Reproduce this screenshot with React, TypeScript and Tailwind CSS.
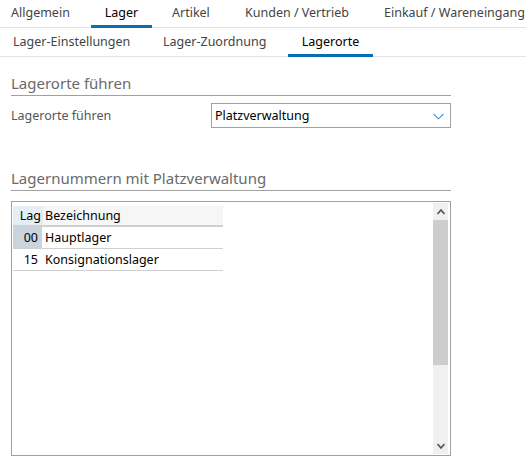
import React from "react";

const font = { fontFamily: '"Noto Sans", "Open Sans", sans-serif' };

export default function App() {
  return (
    <div className="w-[526px] h-[468px] bg-white relative overflow-hidden text-[#333]" style={font}>
      {/* top tabs */}
      <div className="flex h-[28px] border-b border-[#e3e3e3] text-[12.5px] text-[#444]">
        <div className="ml-[11px] w-[80px] pt-[4px]">Allgemein</div>
        <div className="w-[61px] pt-[4px] border-b-[3px] border-[#0a6eb4] text-black text-center -mb-px">Lager</div>
        <div className="ml-[20px] w-[73px] pt-[4px]">Artikel</div>
        <div className="w-[139px] pt-[4px]">Kunden / Vertrieb</div>
        <div className="pt-[4px]">Einkauf / Wareneingang</div>
      </div>
      {/* sub tabs */}
      <div className="flex h-[29px] border-b border-[#e3e3e3] text-[12.5px] text-[#444]">
        <div className="ml-[13px] w-[150px] pt-[5px]">Lager-Einstellungen</div>
        <div className="w-[125px] pt-[5px]">Lager-Zuordnung</div>
        <div className="w-[85px] pt-[5px] border-b-[3px] border-[#0a6eb4] text-black text-center -mb-px">Lagerorte</div>
      </div>

      <div className="px-[11px] w-[462px]">
        <div className="mt-[15px] text-[15px] text-[#6a6a6a] leading-[22px] border-b border-[#a0a0a0] pb-[1px]">Lagerorte führen</div>
        <div className="flex items-center mt-[7px] h-[25px]">
          <div className="w-[200px] text-[12.5px] text-[#555] pt-[2px]">Lagerorte führen</div>
          <div className="flex-1 h-[25px] border border-[#a0a0a0] flex items-center pl-[3px] pr-[6px] pt-[2px] text-[12.5px] text-black">
            <span className="flex-1">Platzverwaltung</span>
            <svg width="11" height="7" viewBox="0 0 11 7">
              <path d="M0.5 0.8 L5.5 5.8 L10.5 0.8" fill="none" stroke="#3a8fd0" strokeWidth="1.1" />
            </svg>
          </div>
        </div>

        <div className="mt-[39px] text-[15px] text-[#6a6a6a] leading-[22px] border-b border-[#a0a0a0] pb-[1px]">Lagernummern mit Platzverwaltung</div>

        <div className="mt-[10px] h-[255px] border border-[#a0a0a0] flex p-[1px]">
          <div className="flex-1 pt-[3px] text-[12.5px]">
            <div className="flex w-[210px] h-[21px] border-b-2 border-[#d0d0d0] bg-[#f6f6f6] text-black">
              <div className="w-[29px] bg-[#e3eef6] text-right pr-[1px] leading-[19px]">Lag</div>
              <div className="flex-1 pl-[2px] border-l border-[#e8e8e8] leading-[19px]">Bezeichnung</div>
            </div>
            <div className="flex w-[210px] h-[22px] border-b border-[#d0d0d0] text-black">
              <div className="w-[29px] bg-[#c9d4de] text-right pr-[4px] leading-[21px]">00</div>
              <div className="flex-1 pl-[3px] leading-[21px]">Hauptlager</div>
            </div>
            <div className="flex w-[210px] h-[22px] border-b border-[#d0d0d0] text-black">
              <div className="w-[29px] text-right pr-[4px] leading-[21px]">15</div>
              <div className="flex-1 pl-[3px] leading-[21px]">Konsignationslager</div>
            </div>
          </div>
          <div className="w-[15px] flex flex-col bg-[#f0f0f0] mr-[1px]">
            <div className="h-[17px] flex items-center justify-center">
              <svg width="8" height="6" viewBox="0 0 8 6">
                <path d="M0.5 5 L4 1 L7.5 5" fill="none" stroke="#555" strokeWidth="1.6" />
              </svg>
            </div>
            <div className="h-[145px] bg-[#cdcdcd]" />
            <div className="flex-1" />
            <div className="h-[17px] flex items-center justify-center">
              <svg width="8" height="6" viewBox="0 0 8 6">
                <path d="M0.5 1 L4 5 L7.5 1" fill="none" stroke="#555" strokeWidth="1.6" />
              </svg>
            </div>
          </div>
        </div>
      </div>
    </div>
  );
}
